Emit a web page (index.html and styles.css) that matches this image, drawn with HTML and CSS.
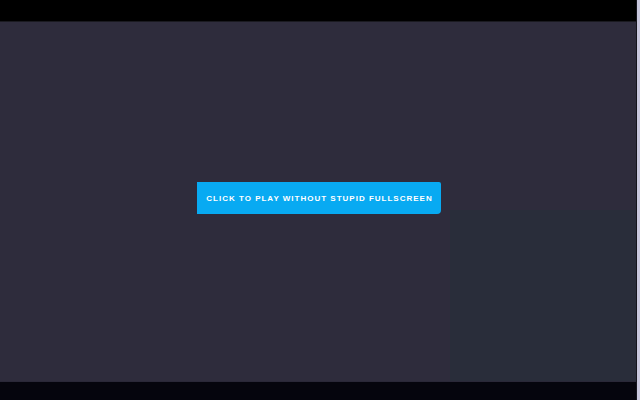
FILE: index.html
```html
<!DOCTYPE html>
<html lang="en">
<head>
  <meta charset="UTF-8" />
  <title>Play</title>
  <link rel="stylesheet" href="styles.css">
</head>
<body>
  <div class="frame">
    <div class="topbar"></div>
    <div class="stage">
      <button class="play-btn">Click to play without stupid fullscreen</button>
    </div>
    <div class="bottombar"></div>
  </div>
  <div class="edge"></div>
</body>
</html>
```

FILE: styles.css
```css
* {
  box-sizing: border-box;
}

html, body {
  height: 100%;
}

body {
  margin: 0;
  display: flex;
  background: #000;
  font-family: "Liberation Sans", Arial, sans-serif;
}

.frame {
  flex: 1;
  display: flex;
  flex-direction: column;
  border-right: 1px solid #15151c;
}

.topbar {
  height: 22px;
  background: #000;
  border-bottom: 1px solid #1a1a20;
}

.stage {
  flex: 1;
  display: flex;
  align-items: flex-start;
  padding: 160px 0 0 197px;
  background: linear-gradient(#292d3a, #292d3a) no-repeat right bottom / 186px 171px, #2e2c3c;
}

.bottombar {
  height: 19px;
  background: #05050d;
  border-top: 1px solid #2a2838;
}

.edge {
  width: 3px;
  background: #c9c8de;
}

.play-btn {
  width: 244px;
  height: 32px;
  padding: 0 0 0 1px;
  border: none;
  border-radius: 0 2px 4px 0;
  background: #08aaf2;
  color: #fff;
  font-family: "Liberation Sans", Arial, sans-serif;
  font-weight: bold;
  font-size: 8px;
  letter-spacing: 1px;
  text-transform: uppercase;
  cursor: pointer;
}
```
